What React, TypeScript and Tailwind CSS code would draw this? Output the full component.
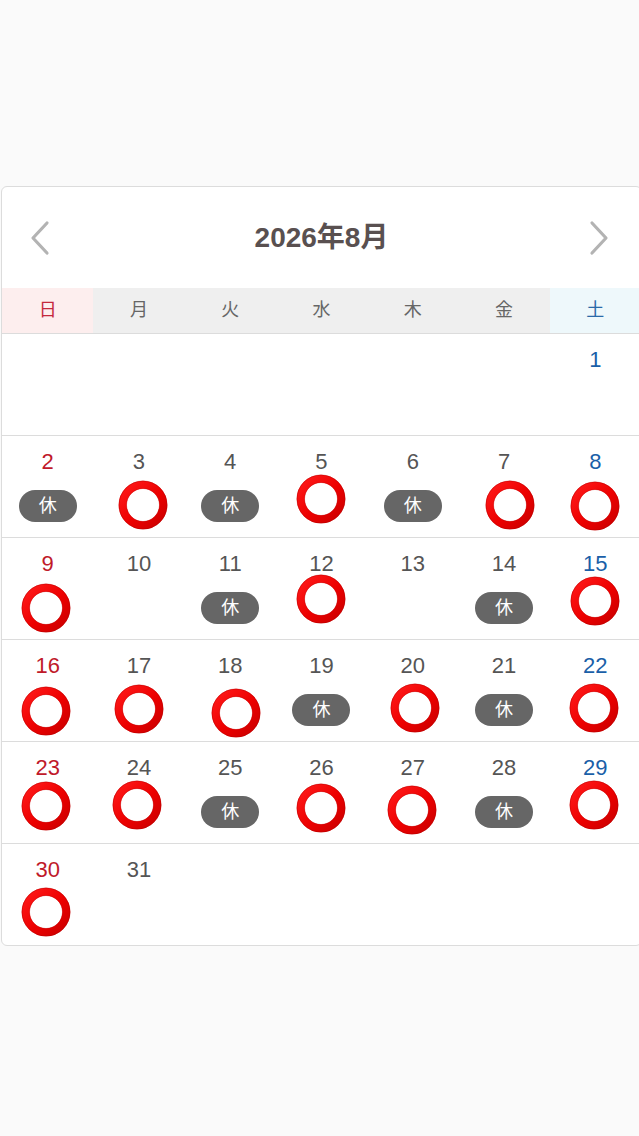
import React from "react";

type Mark = { kind: "open"; shift?: string } | { kind: "off" } | null;

const WEEKDAYS = [
  { label: "日", cls: "bg-[#fdeeee] text-[#c4283c]" },
  { label: "月", cls: "bg-[#efefef] text-[#666]" },
  { label: "火", cls: "bg-[#efefef] text-[#666]" },
  { label: "水", cls: "bg-[#efefef] text-[#666]" },
  { label: "木", cls: "bg-[#efefef] text-[#666]" },
  { label: "金", cls: "bg-[#efefef] text-[#666]" },
  { label: "土", cls: "bg-[#eef8fb] text-[#2a6aa8]" },
];

// August 2026 starts on Saturday
const MARKS: Record<number, Mark> = {
  2: { kind: "off" },
  3: { kind: "open", shift: "translate-x-[4px]" },
  4: { kind: "off" },
  5: { kind: "open", shift: "-translate-y-[6px]" },
  6: { kind: "off" },
  7: { kind: "open", shift: "translate-x-[6px]" },
  8: { kind: "open", shift: "translate-y-[1px]" },
  9: { kind: "open", shift: "-translate-x-[2px] translate-y-[1px]" },
  11: { kind: "off" },
  12: { kind: "open", shift: "-translate-y-[8px]" },
  14: { kind: "off" },
  15: { kind: "open", shift: "-translate-y-[6px]" },
  16: { kind: "open", shift: "-translate-x-[2px] translate-y-[2px]" },
  17: { kind: "open" },
  18: { kind: "open", shift: "translate-x-[6px] translate-y-[4px]" },
  19: { kind: "off" },
  20: { kind: "open", shift: "translate-x-[2px] -translate-y-[1px]" },
  21: { kind: "off" },
  22: { kind: "open", shift: "-translate-x-[1px] -translate-y-[1px]" },
  23: { kind: "open", shift: "-translate-x-[2px] -translate-y-[5px]" },
  24: { kind: "open", shift: "-translate-x-[2px] -translate-y-[6px]" },
  25: { kind: "off" },
  26: { kind: "open", shift: "-translate-y-[3px]" },
  27: { kind: "open", shift: "-translate-x-[1px] -translate-y-[1px]" },
  28: { kind: "off" },
  29: { kind: "open", shift: "-translate-x-[1px] -translate-y-[6px]" },
  30: { kind: "open", shift: "-translate-x-[2px] -translate-y-[1px]" },
};

function OpenCircle({ shift = "" }: { shift?: string }) {
  return (
    <svg width="50" height="50" viewBox="0 0 50 50" className={shift}>
      <defs>
        <linearGradient id="ring" x1="0" y1="0" x2="1" y2="1">
          <stop offset="0%" stopColor="#ff1a1a" />
          <stop offset="55%" stopColor="#ec0000" />
          <stop offset="100%" stopColor="#cc0000" />
        </linearGradient>
      </defs>
      <circle cx="25" cy="25" r="20.3" fill="none" stroke="url(#ring)" strokeWidth="8" />
      <circle cx="25" cy="25" r="16.5" fill="none" stroke="#c40000" strokeWidth="0.7" opacity="0.6" />
      <circle cx="25" cy="25" r="24" fill="none" stroke="#b00000" strokeWidth="0.8" opacity="0.55" />
    </svg>
  );
}

function OffBadge() {
  return (
    <div className="w-[58px] h-[32px] translate-y-[1px] rounded-full bg-[#666] text-white text-[18px] flex items-center justify-center">
      休
    </div>
  );
}

function DayCell({ day, col }: { day: number | null; col: number }) {
  if (day === null) return <div className="h-[101px]" />;
  const color = col === 0 ? "text-[#c01a2a]" : col === 6 ? "text-[#1a5fa8]" : "text-[#555]";
  const mark = MARKS[day];
  return (
    <div className="h-[101px] flex flex-col items-center pt-[12px]">
      <div className={`text-[22px] leading-[28px] ${color}`}>{day}</div>
      <div className="h-[52px] mt-[3px] flex items-center justify-center">
        {mark?.kind === "open" && <OpenCircle shift={mark.shift} />}
        {mark?.kind === "off" && <OffBadge />}
      </div>
    </div>
  );
}

export default function App() {
  const cells: (number | null)[] = [...Array(6).fill(null), ...Array.from({ length: 31 }, (_, i) => i + 1)];
  while (cells.length % 7) cells.push(null);
  const weeks: (number | null)[][] = [];
  for (let i = 0; i < cells.length; i += 7) weeks.push(cells.slice(i, i + 7));

  return (
    <div
      className="w-[639px] min-h-[1136px] overflow-hidden bg-[#fafafa] pt-[186px]"
      style={{ fontFamily: '"Liberation Sans", "Noto Sans CJK JP", sans-serif' }}
    >
      <div className="ml-px w-[641px] bg-white border border-[#dcdcdc] rounded-[6px] overflow-hidden">
        {/* Header */}
        <div className="h-[101px] flex items-center justify-between px-[26px]">
          <svg width="24" height="36" viewBox="0 0 24 36">
            <path d="M19 3 L5 18 L19 33" fill="none" stroke="#b3b3b3" strokeWidth="3.2" strokeLinecap="round" strokeLinejoin="round" />
          </svg>
          <h2 className="text-[28px] font-bold text-[#595050]">2026年8月</h2>
          <svg width="24" height="36" viewBox="0 0 24 36" className="-translate-x-[4px]">
            <path d="M5 3 L19 18 L5 33" fill="none" stroke="#b3b3b3" strokeWidth="3.2" strokeLinecap="round" strokeLinejoin="round" />
          </svg>
        </div>

        {/* Weekdays */}
        <div className="grid grid-cols-7 border-b border-[#dcdcdc]">
          {WEEKDAYS.map((w) => (
            <div key={w.label} className={`h-[45px] flex items-center justify-center text-[18px] ${w.cls}`}>
              {w.label}
            </div>
          ))}
        </div>

        {/* Weeks */}
        {weeks.map((week, wi) => (
          <div key={wi} className={`grid grid-cols-7 ${wi < weeks.length - 1 ? "border-b border-[#dcdcdc]" : ""}`}>
            {week.map((d, ci) => (
              <DayCell key={ci} day={d} col={ci} />
            ))}
          </div>
        ))}
      </div>
    </div>
  );
}
